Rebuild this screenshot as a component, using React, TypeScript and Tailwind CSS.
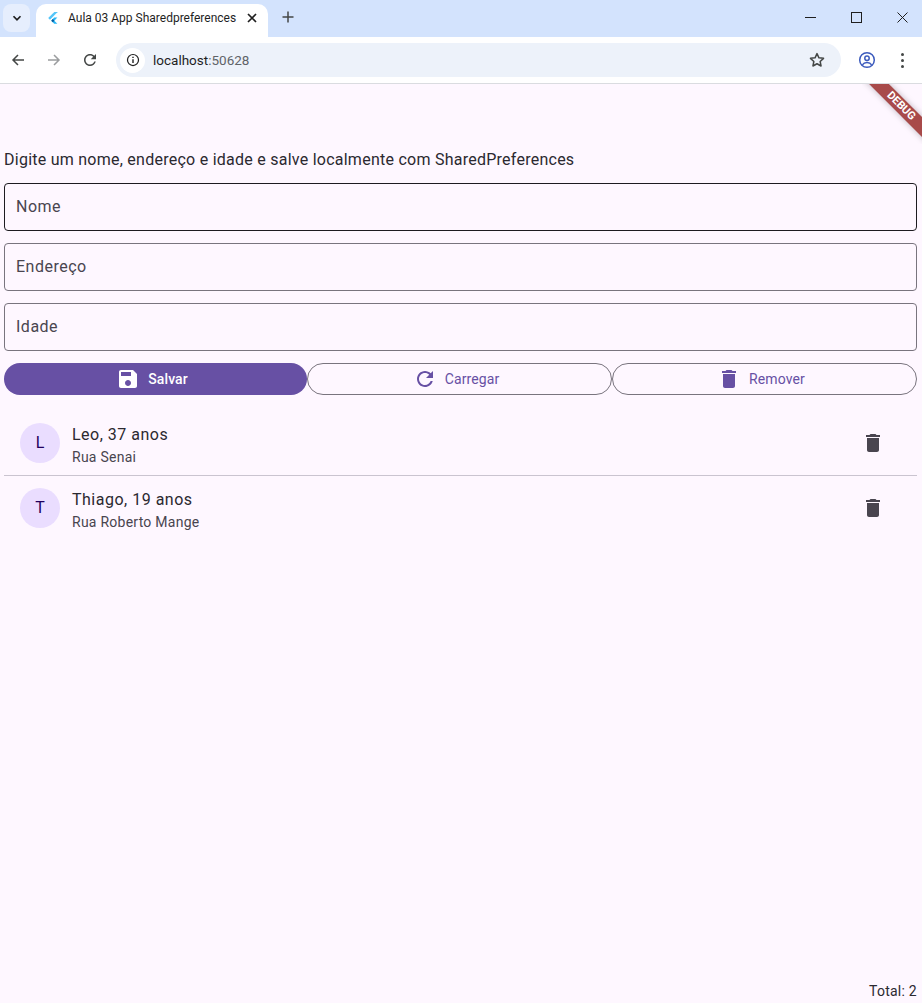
import React from "react";

const P = {
  del: "M6 19c0 1.1.9 2 2 2h8c1.1 0 2-.9 2-2V7H6v12zM19 4h-3.5l-1-1h-5l-1 1H5v2h14V4z",
  save: "M17 3H5c-1.11 0-2 .9-2 2v14c0 1.1.89 2 2 2h14c1.1 0 2-.9 2-2V7l-4-4zm-5 16c-1.66 0-3-1.34-3-3s1.34-3 3-3 3 1.34 3 3-1.34 3-3 3zm3-10H5V5h10v4z",
  refresh: "M17.65 6.35C16.2 4.9 14.21 4 12 4c-4.42 0-7.99 3.58-7.99 8s3.57 8 7.99 8c3.73 0 6.84-2.55 7.73-6h-2.08c-.82 2.33-3.04 4-5.65 4-3.31 0-6-2.69-6-6s2.69-6 6-6c1.66 0 3.14.69 4.22 1.78L13 11h7V4l-2.35 2.35z",
};

function MI({ d, className }: { d: string; className: string }) {
  return (
    <svg viewBox="0 0 24 24" className={className} fill="currentColor">
      <path d={d} />
    </svg>
  );
}

function Stroke({ children, className, w = 16 }: { children: React.ReactNode; className?: string; w?: number }) {
  return (
    <svg viewBox={`0 0 ${w} ${w}`} width={w} height={w} className={className} fill="none" stroke="currentColor" strokeWidth="1.5">
      {children}
    </svg>
  );
}

function TabStrip() {
  return (
    <div className="h-[37px] bg-[#d3e3fd] flex items-end pl-[3px] text-[#1f1f1f] shrink-0">
      <div className="w-[27px] h-[28px] mb-[5px] rounded-[8px] bg-[#e6eefd] flex items-center justify-center">
        <svg viewBox="0 0 16 16" width="14" height="14" fill="none" stroke="#1f1f1f" strokeWidth="2"><path d="M4 6l4 4 4-4" /></svg>
      </div>
      <div className="ml-[6px] w-[232px] h-[33px] bg-white rounded-t-[10px] flex items-center pl-[10px] pr-[10px] pb-[6px]">
        <svg viewBox="0 0 16 16" width="14" height="14">
          <path d="M9.500 1L2.500 8l2 2L13 1.500V1z" fill="#54c5f8" />
          <path d="M9.300 7.500L6 11l3.400 3.700H13L9.500 11l3.500-3.500z" fill="#29b6f6" />
          <path d="M6 11l1.800-1.800L9.600 11 7.800 12.800z" fill="#01579b" />
        </svg>
        <span className="ml-[8px] text-[12px] leading-[16px] font-['Roboto',sans-serif] whitespace-nowrap flex-1 text-[#1f1f1f]">Aula 03 App Sharedpreferences</span>
        <Stroke className="w-[12px] h-[12px]" w={12}><path d="M2 2l8 8M10 2l-8 8" strokeWidth="1.7" /></Stroke>
      </div>
      <div className="ml-[14px] mb-[10px] w-[12px] h-[20px] flex items-center">
        <Stroke className="w-[12px] h-[12px] text-[#444746]" w={12}><path d="M6 0.500v11M0.500 6h11" /></Stroke>
      </div>
      <div className="flex-1" />
      <div className="flex items-center h-[37px] pb-[3px] mr-[-3px] text-[#1f1f1f]">
        <div className="w-[46px] flex justify-center"><svg width="11" height="11" viewBox="0 0 11 11" stroke="currentColor"><path d="M0 5.500h11" /></svg></div>
        <div className="w-[46px] flex justify-center"><svg width="11" height="11" viewBox="0 0 11 11" fill="none" stroke="currentColor"><rect x=".5" y=".5" width="10" height="10" /></svg></div>
        <div className="w-[46px] flex justify-center"><svg width="11" height="11" viewBox="0 0 11 11" stroke="currentColor"><path d="M.5.5l10 10M10.500.5l-10 10" /></svg></div>
      </div>
    </div>
  );
}

function Toolbar() {
  return (
    <div className="h-[47px] bg-white border-b border-[#dadce0] flex items-center shrink-0 text-[#444746]">
      <div className="w-[36px] flex justify-center"><Stroke className="w-[16px] h-[16px]"><path d="M14 8H3M8 3L3 8l5 5" /></Stroke></div>
      <div className="w-[36px] flex justify-center text-[#9b9d9f]"><Stroke className="w-[16px] h-[16px]"><path d="M2 8h11M8 3l5 5-5 5" /></Stroke></div>
      <div className="w-[36px] flex justify-center">
        <svg viewBox="0 0 24 24" className="w-[18px] h-[18px]" fill="currentColor"><path d={P.refresh} /></svg>
      </div>
      <div className="ml-[8px] w-[725px] h-[34px] rounded-full bg-[#edf2fa] flex items-center pl-[4px] pr-[15px]">
        <div className="w-[25px] h-[25px] rounded-full bg-white flex items-center justify-center">
          <svg viewBox="0 0 16 16" width="14" height="14" fill="none" stroke="#1f1f1f" strokeWidth="1.4"><circle cx="8" cy="8" r="6.3" /><path d="M8 7v4.500" strokeWidth="1.6" /><path d="M8 4.200v1.600" strokeWidth="1.6" /></svg>
        </div>
        <span className="ml-[8px] flex-1 text-[13.5px] leading-[18px] font-['Roboto',sans-serif] text-[#1f1f1f]">localhost<span className="text-[#5f6368]">:50628</span></span>
        <svg viewBox="0 0 24 24" className="w-[18px] h-[18px]" fill="none" stroke="#444746" strokeWidth="2"><path d="M12 3.500l2.600 5.600 6.100.7-4.500 4.200 1.200 6L12 17l-5.400 3 1.200-6-4.500-4.200 6.100-.7z" strokeLinejoin="round" /></svg>
      </div>
      <div className="ml-[17px] w-[18px] h-[18px]">
        <svg viewBox="0 0 18 18" className="w-[18px] h-[18px]" fill="none" stroke="#3c5bbd" strokeWidth="1.5"><circle cx="9" cy="9" r="7.3" /><circle cx="9" cy="7.2" r="2.2" /><path d="M4.400 13.800c1-1.600 2.800-2.300 4.600-2.300s3.600.7 4.600 2.300" /></svg>
      </div>
      <div className="ml-[25px] flex flex-col gap-[3px]">
        <div className="w-[3px] h-[3px] rounded-full bg-[#444746]" />
        <div className="w-[3px] h-[3px] rounded-full bg-[#444746]" />
        <div className="w-[3px] h-[3px] rounded-full bg-[#444746]" />
      </div>
    </div>
  );
}

function Field({ label, focused }: { label: string; focused?: boolean }) {
  return (
    <div className={`h-[48px] rounded-[4px] border flex items-center pl-[11px] pb-[1px] text-[16px] tracking-[0.5px] text-[#49454f] ${focused ? "border-[#1d1b20]" : "border-[#79747e]"}`}>
      {label}
    </div>
  );
}

function OutlineBtn({ d, label }: { d: string; label: string }) {
  return (
    <div className="flex-1 h-[32px] rounded-full border border-[#79747e] flex items-center justify-center gap-[8px] pr-[7px] text-[#6750a4] text-[14px] tracking-[0.1px]">
      <MI d={d} className="w-[24px] h-[24px]" />
      <span>{label}</span>
    </div>
  );
}

function Row({ init, title, sub }: { init: string; title: string; sub: string }) {
  return (
    <div className="h-[64px] flex items-center pl-[16px] pr-[32px]">
      <div className="w-[40px] h-[40px] rounded-full bg-[#eaddff] flex items-center justify-center text-[16px] text-[#21005d]">{init}</div>
      <div className="ml-[12px] flex-1 pt-[4px]">
        <div className="text-[16px] leading-[24px] tracking-[0.5px] text-[#2b2930]">{title}</div>
        <div className="text-[14px] leading-[20px] tracking-[0.25px] text-[#49454f]">{sub}</div>
      </div>
      <MI d={P.del} className="w-[24px] h-[24px] text-[#49454f]" />
    </div>
  );
}

export default function App() {
  return (
    <div className="h-[1003px] flex flex-col overflow-hidden font-['Roboto',sans-serif] bg-[#fef7ff]">
      <TabStrip />
      <Toolbar />
      <div className="relative flex-1 flex flex-col pl-[4px] pr-[5px] overflow-hidden">
        <div className="absolute top-[0px] right-[0px] w-[60px] h-[60px] overflow-hidden">
          <div className="absolute left-[-11px] top-[15px] w-[100px] h-[14px] bg-[#a84a4a] rotate-45 flex items-center justify-center text-white text-[11px] font-bold leading-[12px] shadow-[0_0_6px_rgba(0,0,0,0.25)]">DEBUG</div>
        </div>
        <div className="mt-[64px] text-[16px] leading-[24px] tracking-[0.25px] text-[#2b2930]">Digite um nome, endereço e idade e salve localmente com SharedPreferences</div>
        <div className="mt-[11px] flex flex-col gap-[12px]">
          <Field label="Nome" focused />
          <Field label="Endereço" />
          <Field label="Idade" />
        </div>
        <div className="mt-[12px] flex">
          <div className="flex-1 h-[32px] rounded-full bg-[#6750a4] flex items-center justify-center gap-[8px] pr-[7px] text-white text-[14px] font-medium tracking-[0.1px]">
            <MI d={P.save} className="w-[24px] h-[24px]" />
            <span>Salvar</span>
          </div>
          <OutlineBtn d={P.refresh} label="Carregar" />
          <OutlineBtn d={P.del} label="Remover" />
        </div>
        <div className="mt-[16px]">
          <Row init="L" title="Leo, 37 anos" sub="Rua Senai" />
          <div className="h-[1px] bg-[#cac4d0]" />
          <Row init="T" title="Thiago, 19 anos" sub="Rua Roberto Mange" />
        </div>
        <div className="flex-1" />
        <div className="text-right text-[14px] leading-[24px] tracking-[0.25px] text-[#2b2930]">Total: 2</div>
      </div>
    </div>
  );
}
